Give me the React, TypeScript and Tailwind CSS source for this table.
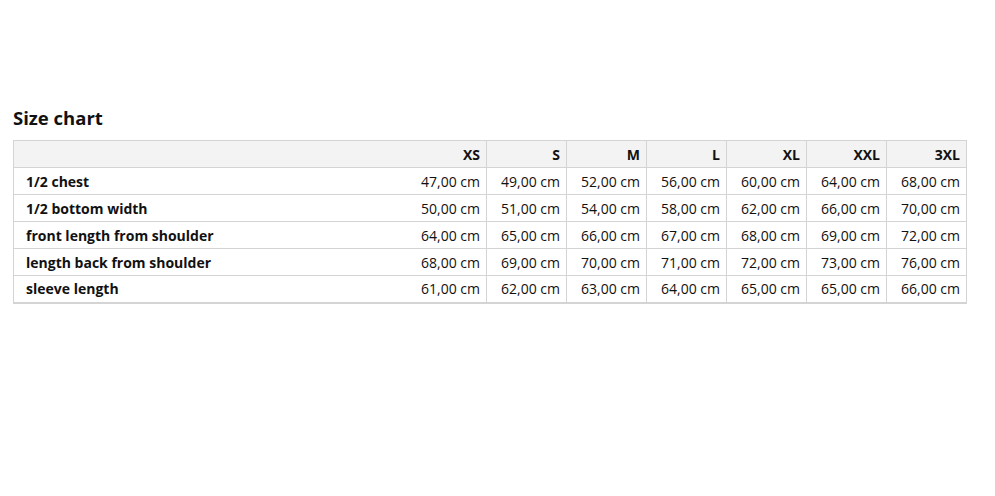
const sizes = ["XS", "S", "M", "L", "XL", "XXL", "3XL"];

const rows: { label: string; values: string[] }[] = [
  { label: "1/2 chest", values: ["47,00", "49,00", "52,00", "56,00", "60,00", "64,00", "68,00"] },
  { label: "1/2 bottom width", values: ["50,00", "51,00", "54,00", "58,00", "62,00", "66,00", "70,00"] },
  { label: "front length from shoulder", values: ["64,00", "65,00", "66,00", "67,00", "68,00", "69,00", "72,00"] },
  { label: "length back from shoulder", values: ["68,00", "69,00", "70,00", "71,00", "72,00", "73,00", "76,00"] },
  { label: "sleeve length", values: ["61,00", "62,00", "63,00", "64,00", "65,00", "65,00", "66,00"] },
];

const App: React.FC = () => {
  return (
    <div className="min-h-[496px] bg-white font-['Open_Sans',sans-serif] text-[#111] pl-[13px] pt-[105px]">
      <h2 className="text-[18.5px] font-bold leading-[26px] mb-[9px]">Size chart</h2>

      <table className="border-collapse text-[14px] leading-[19px] table-fixed w-[953px] border-b-2 border-b-[#d4d4d4]">
        <colgroup>
          <col className="w-[393px]" />
          {sizes.map((s) => (
            <col key={s} className="w-[80px]" />
          ))}
        </colgroup>
        <thead>
          <tr className="bg-[#f3f3f3] h-[27px]">
            <th className="border-l border-y border-[#d4d4d4]"></th>
            {sizes.map((s) => (
              <th key={s} className="border-y border-r border-[#d4d4d4] text-right font-bold pr-[6px]">
                {s}
              </th>
            ))}
          </tr>
        </thead>
        <tbody>
          {rows.map((row) => (
            <tr key={row.label} className="h-[27px]">
              <td className="border-l border-b border-[#d4d4d4] font-bold pl-[12px] text-left">
                {row.label}
              </td>
              {row.values.map((v, i) => (
                <td key={i} className="border-b border-r border-[#d4d4d4] text-right pr-[6px] whitespace-nowrap">
                  {v} cm
                </td>
              ))}
            </tr>
          ))}
        </tbody>
      </table>
    </div>
  );
};

export default App;
